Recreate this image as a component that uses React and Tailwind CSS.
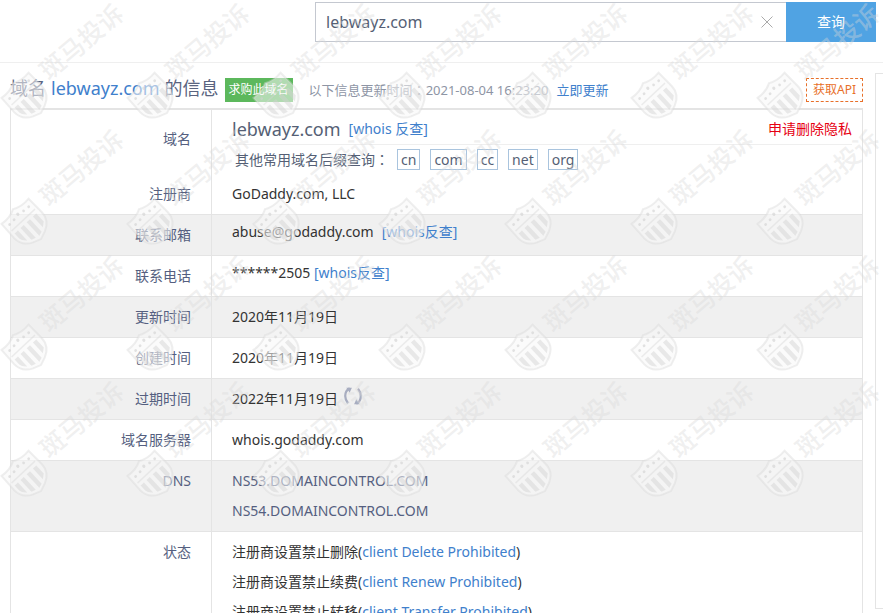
import React, { useState } from 'react';

const SUFFIXES = ['cn', 'com', 'cc', 'net', 'org'];

const STATUSES = [
  { label: '注册商设置禁止删除', code: 'client Delete Prohibited' },
  { label: '注册商设置禁止续费', code: 'client Renew Prohibited' },
  { label: '注册商设置禁止转移', code: 'client Transfer Prohibited' },
];

const TILE = 126;
const TILE_COLUMNS = [0, 1, 2, 3, 4, 5, 6];
const TILE_ROWS = [0, 1, 2, 3];

/**
 * One watermark stamp: a tilted striped shield followed by the site name.
 */
function Stamp({ x, y }) {
  return (
    <g transform={`translate(${x} ${y})`}>
      <g transform="translate(26 97) rotate(-43)">
        <path
          d="M-18.500 -16 Q-8 -14.500 0 -19 Q8 -14.500 18.500 -16 L19 3 Q19 14 8 19 L0 22 L-8 19 Q-19 14 -19 3 Z"
          fill="#f8f8f8"
          fillOpacity="0.55"
          stroke="#d8d8d8"
          strokeOpacity="0.4"
          strokeWidth="2"
        />
        <path d="M-16 -4 H16" stroke="#d4d4d4" strokeOpacity="0.4" strokeWidth="1.500" />
        <path
          d="M-15.500 0 H-11 V13.500 Q-15.500 10 -15.500 5 Z M-7.500 0 H-3 V17.500 L-7.500 16 Z M1 0 H5.500 V17 L1 18.500 Z M9.500 0 H14 V11 L9.500 14.500 Z"
          fill="#d0d0d0"
          fillOpacity="0.45"
        />
        <g fill="#d0d0d0" fillOpacity="0.6">
          <circle cx="-13" cy="-10" r="1.400" />
          <circle cx="-6.500" cy="-10.500" r="1.400" />
          <circle cx="0" cy="-12" r="1.600" />
          <circle cx="6.500" cy="-10.500" r="1.400" />
          <circle cx="13" cy="-10" r="1.400" />
        </g>
      </g>
      <text
        transform="translate(49 81) rotate(-40)"
        fontSize="25"
        fontWeight="500"
        fill="#d8d8d8"
        fillOpacity="0.4"
      >
        斑马投诉
      </text>
    </g>
  );
}

function Watermark() {
  return (
    <svg className="absolute inset-0 w-full h-full overflow-hidden pointer-events-none" aria-hidden="true">
      {TILE_ROWS.map((row) =>
        TILE_COLUMNS.map((col) => <Stamp key={`${row}-${col}`} x={col * TILE} y={row * TILE} />)
      )}
    </svg>
  );
}

/**
 * A labelled line of the record. Contact lines carry their value a little higher.
 */
function Row({ label, shaded, contact, children }) {
  return (
    <tr className={`border-b border-[#e4e4e4] ${shaded ? 'bg-[#f0f0f0]' : ''}`}>
      <th scope="row" className="py-[5px] pr-5 border-r border-[#e4e4e4] font-normal text-right align-top text-[#555f80]">
        {label}
      </th>
      <td className={`py-[5px] pl-5 align-top ${contact ? 'leading-6' : ''}`}>{children}</td>
    </tr>
  );
}

function LookupLink({ children }) {
  return (
    <a href="#whois" className="text-[#4080cc]">
      {children}
    </a>
  );
}

function Colon() {
  return <span className="font-['Noto_Sans_CJK_TC',sans-serif]">：</span>;
}

function App() {
  const [query, setQuery] = useState('lebwayz.com');

  return (
    <div className="relative min-h-screen overflow-hidden bg-white text-sm text-[#333] font-['Noto_Sans','Noto_Sans_CJK_SC',sans-serif]">
      {/* Search bar */}
      <header className="pt-0.5 pb-5 pl-[315px] pr-[7px] border-b border-[#efefef]">
        <form className="flex h-10" onSubmit={(e) => e.preventDefault()}>
          <div className="flex flex-1 min-w-0 items-center border border-r-0 border-[#c4c8d0]">
            <input
              type="text"
              aria-label="域名"
              value={query}
              onChange={(e) => setQuery(e.target.value)}
              className="flex-1 min-w-0 h-full px-2.5 text-base text-[#555f75] outline-none"
            />
            <button type="button" aria-label="清空" onClick={() => setQuery('')} className="px-3">
              <svg className="w-3.5 h-3.5" viewBox="0 0 14 14" fill="none" stroke="#aaa">
                <path d="M1.500 1.500 L12.500 12.500 M12.500 1.500 L1.500 12.500" />
              </svg>
            </button>
          </div>
          <button type="submit" className="w-[90px] bg-[#50a3e3] text-white">
            查询
          </button>
        </form>
      </header>

      <div className="flex items-start gap-3 pl-2.5 pt-2.5">
        <main className="flex-1 min-w-0">
          {/* Title line */}
          <div className="flex items-start pt-[5px] h-[35px] leading-6">
            <h1 className="flex gap-[5px] -mt-1 text-lg text-[#5a6480]">
              <span>域名</span>
              <span className="text-[#4080cc]">lebwayz.com</span>
              <span>的信息</span>
            </h1>
            <a href="#buy" className="ml-1.5 h-6 px-1 text-xs leading-6 text-white bg-[#5cb85c]">
              求购此域名
            </a>
            <p className="flex gap-2 ml-4 text-[13px] leading-6 text-[#8e95a5]">
              <span>以下信息更新时间<Colon />2021-08-04 16:23:20</span>
              <a href="#refresh" className="text-[#4080cc]">立即更新</a>
            </p>
            <a href="#api" className="ml-auto h-6 px-1.5 text-xs leading-[22px] text-[#e8702a] border border-dashed border-[#e8702a]">
              获取API
            </a>
          </div>

          {/* Whois record */}
          <table className="w-full table-fixed border border-t-2 border-[#e4e4e4] leading-[30px]">
            <colgroup>
              <col className="w-[201px]" />
              <col />
            </colgroup>
            <tbody>
              <tr>
                <th scope="row" className="pt-3.5 pr-5 border-r border-[#e4e4e4] font-normal text-right align-top text-[#555f80]">
                  域名
                </th>
                <td className="pl-5 pr-2.5">
                  <div className="flex items-center h-[35px] pt-1 border-b border-[#efefef]">
                    <span className="text-lg text-[#555f75]">lebwayz.com</span>
                    <span className="ml-2"><LookupLink>[whois 反查]</LookupLink></span>
                    <a href="#privacy" className="ml-auto text-[#e60012]">申请删除隐私</a>
                  </div>
                  <div className="flex items-center h-[29px] pl-[3px] text-[#555f75]">
                    <span>其他常用域名后缀查询<Colon /></span>
                    <span className="flex gap-2.5 ml-2">
                      {SUFFIXES.map((suffix) => (
                        <a key={suffix} href={`#${suffix}`} className="px-[3px] leading-[19px] border border-[#a9c4de]">
                          {suffix}
                        </a>
                      ))}
                    </span>
                  </div>
                </td>
              </tr>
              <Row label="注册商">GoDaddy.com, LLC</Row>
              <Row label="联系邮箱" shaded contact>
                <span className="flex gap-2">
                  abuse@godaddy.com <LookupLink>[whois反查]</LookupLink>
                </span>
              </Row>
              <Row label="联系电话" contact>
                ******2505 <LookupLink>[whois反查]</LookupLink>
              </Row>
              <Row label="更新时间" shaded>2020年11月19日</Row>
              <Row label="创建时间">2020年11月19日</Row>
              <Row label="过期时间" shaded>
                <span className="flex items-start gap-1.5">
                  2022年11月19日
                  <svg className="w-[18px] h-5 mt-0.5" viewBox="0 0 16 18" fill="none" stroke="#a8adc0" strokeWidth="2">
                    <path d="M5 2 Q1 4 1 9 Q1 12.500 3.500 15.500 M11 16 Q15 14 15 9 Q15 5.500 12.500 2.500" />
                    <path d="M2 1.500 H7 L5 6 Z M14 16.500 H9 L11 12 Z" fill="#a8adc0" stroke="none" />
                  </svg>
                </span>
              </Row>
              <Row label="域名服务器">whois.godaddy.com</Row>
              <Row label="DNS" shaded>
                <div className="text-[#555f80]">
                  <p>NS53.DOMAINCONTROL.COM</p>
                  <p>NS54.DOMAINCONTROL.COM</p>
                </div>
              </Row>
              <Row label="状态">
                {STATUSES.map(({ label, code }) => (
                  <p key={code}>
                    {label}(<a href="#status" className="text-[#4080cc]">{code}</a>)
                  </p>
                ))}
              </Row>
            </tbody>
          </table>
        </main>

        {/* Edge of the side panel */}
        <aside className="w-2 h-[536px] border border-r-0 border-[#e4e4e4]" />
      </div>

      <Watermark />
    </div>
  );
}

export default App;
